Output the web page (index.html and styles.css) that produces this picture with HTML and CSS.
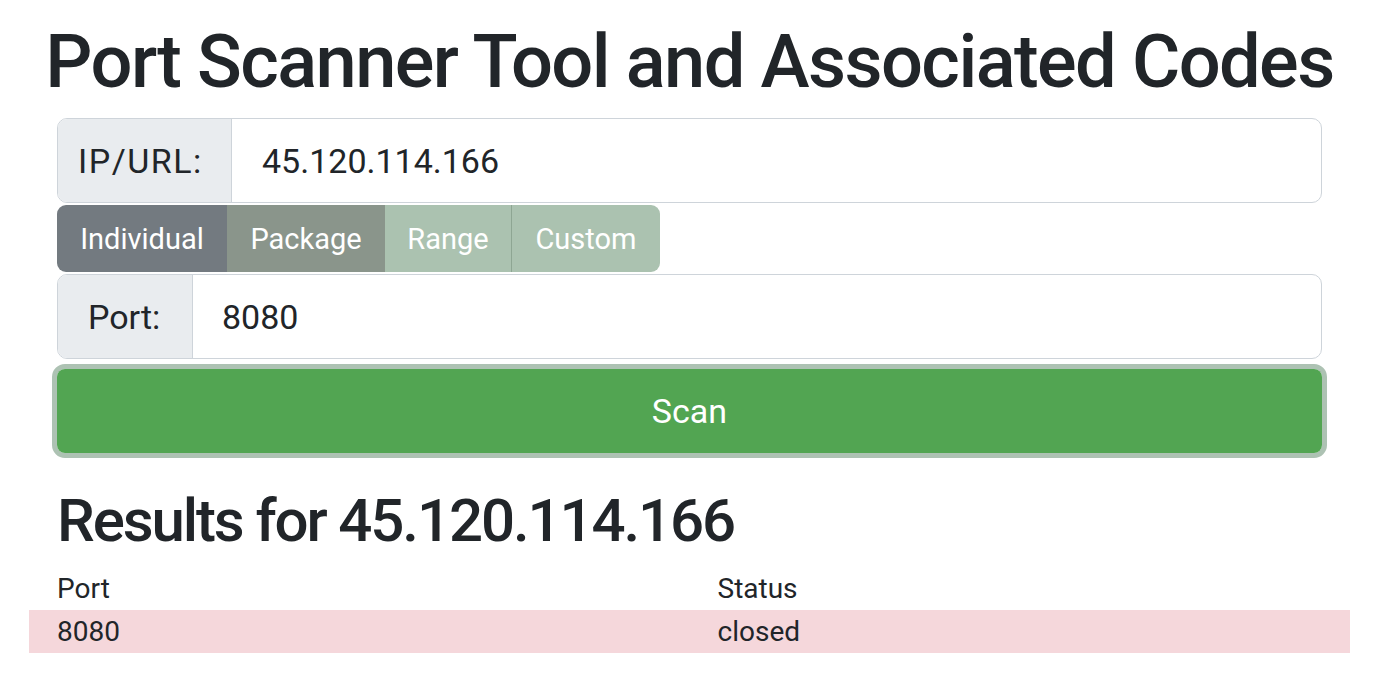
FILE: index.html
```html
<!DOCTYPE html>
<html>
<head>
<meta charset="utf-8">
<link rel="stylesheet" href="styles.css">
</head>
<body>
<div class="container">
  <h1 class="title">Port Scanner Tool and Associated Codes</h1>
  <form class="scan-form">
    <div class="input-group">
      <span class="addon addon-ip">IP/URL:</span>
      <span class="field field-ip">45.120.114.166</span>
    </div>
    <div class="btn-group">
      <span class="seg seg-individual">Individual</span>
      <span class="seg seg-package">Package</span>
      <span class="seg seg-range">Range</span>
      <span class="seg seg-custom">Custom</span>
    </div>
    <div class="input-group">
      <span class="addon addon-port">Port:</span>
      <span class="field field-port">8080</span>
    </div>
    <div class="scan-wrap">
      <button type="button" class="scan-btn">Scan</button>
    </div>
  </form>
  <h2 class="results-title">Results for 45.120.114.166</h2>
  <table class="results">
    <thead>
      <tr><th>Port</th><th>Status</th></tr>
    </thead>
    <tbody>
      <tr class="row-danger"><td>8080</td><td>closed</td></tr>
    </tbody>
  </table>
</div>
</body>
</html>
```
FILE: styles.css
```css
* { box-sizing: border-box; }
html, body { margin: 0; padding: 0; background: #fff; }
body {
  font-family: Roboto, "Liberation Sans", sans-serif;
  color: #212529;
  width: 1400px;
  height: 680px;
  overflow: hidden;
}
.container {
  width: 1321px;
  margin-left: 29px;
}
.title {
  margin: 0;
  padding-top: 22px;
  height: 118px;
  font-size: 74px;
  font-weight: 500;
  line-height: 80px;
  text-align: center;
  white-space: nowrap;
  letter-spacing: -1.6px;
}
.scan-form {
  padding: 0 28px;
  display: flex;
  flex-direction: column;
}
.input-group {
  display: flex;
  height: 85px;
  border: 1px solid #ced4da;
  border-radius: 10px;
  overflow: hidden;
  font-size: 34px;
}
.addon {
  background: #e9ecef;
  border-right: 1px solid #ced4da;
  display: flex;
  align-items: center;
  color: #212529;
}
.addon-ip { width: 174px; padding-left: 20px; letter-spacing: 1.5px; }
.addon-port { width: 135px; padding-left: 30px; }
.field {
  flex: 1;
  display: flex;
  align-items: center;
  color: #212529;
}
.field-ip { padding-left: 30px; }
.field-port { padding-left: 29px; }
.btn-group {
  display: flex;
  margin: 2px 0;
  height: 67px;
  align-self: flex-start;
  border-radius: 9px;
  overflow: hidden;
  font-size: 29px;
  color: #fff;
}
.seg {
  display: flex;
  align-items: center;
  justify-content: center;
}
.seg-individual { width: 170px; background: #737a80; }
.seg-package { width: 158px; background: #8a958b; }
.seg-range { width: 127px; background: #abc2b0; border-right: 1px solid #8ea693; }
.seg-custom { width: 148px; background: #abc2b0; }
.scan-wrap {
  margin: 5px -5px 0;
  border: 5px solid #adc2b3;
  border-radius: 13px;
}
.scan-btn {
  display: block;
  width: 100%;
  height: 84px;
  border: none;
  border-radius: 8px;
  background: #52a552;
  color: #fff;
  font-family: Roboto, "Liberation Sans", sans-serif;
  font-size: 34px;
  padding: 0;
}
.results-title {
  margin: 0;
  padding: 28px 28px 0;
  height: 109px;
  font-size: 60px;
  line-height: 70px;
  font-weight: 500;
  letter-spacing: -2.1px;
}
.results {
  width: 100%;
  border-collapse: collapse;
  font-size: 28px;
  table-layout: fixed;
}
.results th, .results td {
  text-align: left;
  font-weight: 400;
  padding: 0 28px;
  height: 43px;
  vertical-align: middle;
}
.row-danger td { background: #f5d7db; }
```
